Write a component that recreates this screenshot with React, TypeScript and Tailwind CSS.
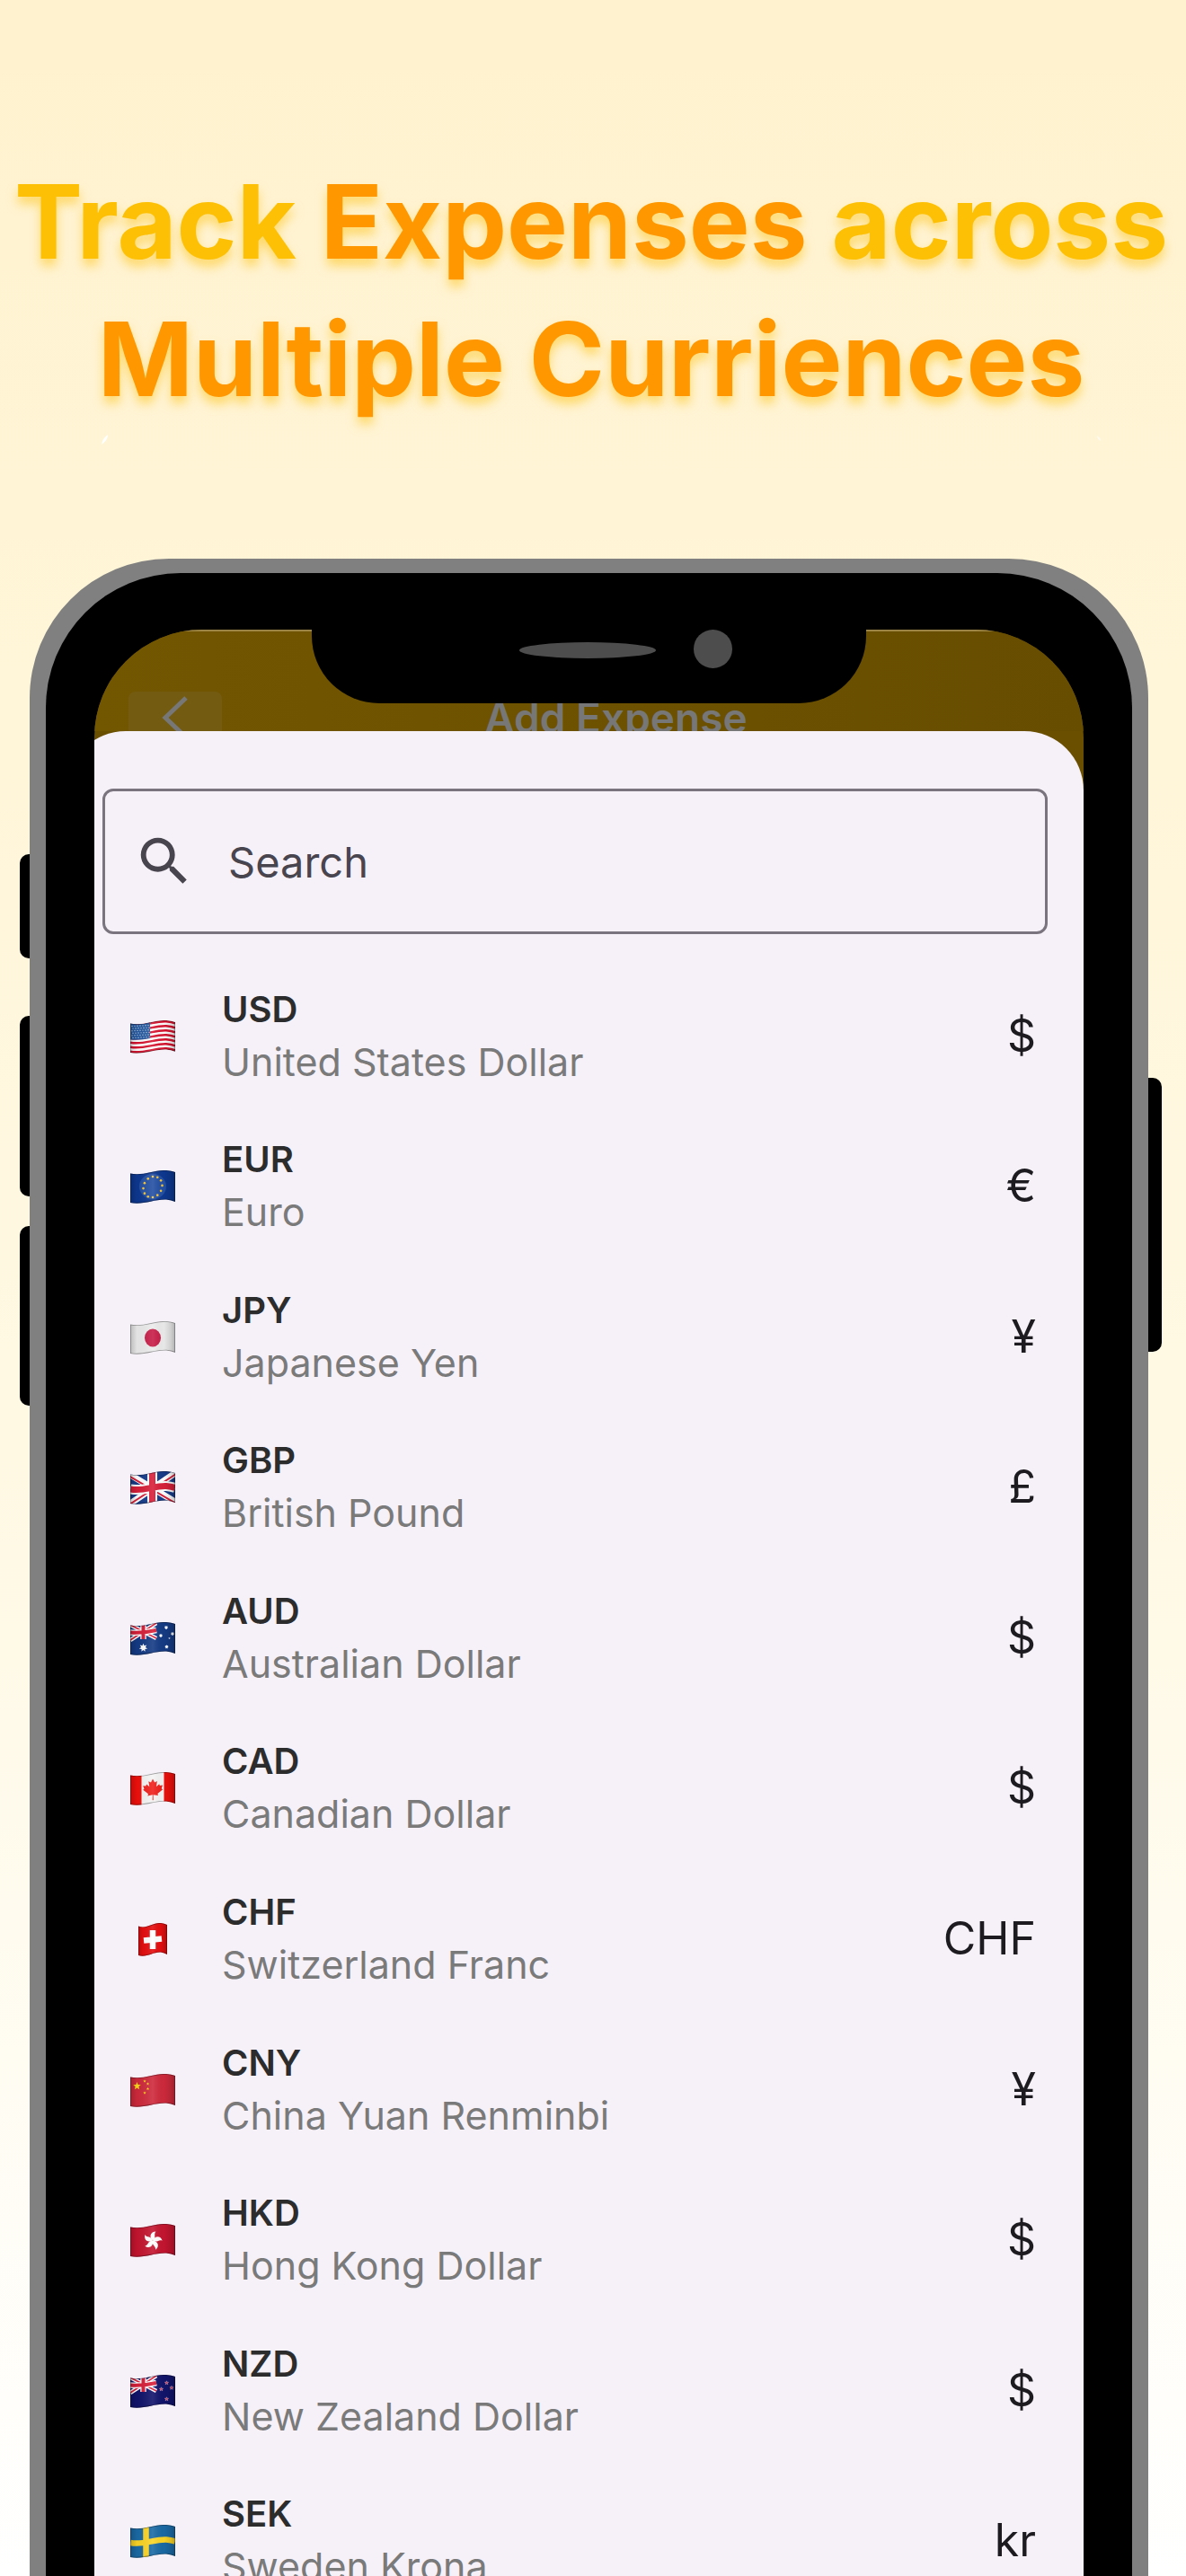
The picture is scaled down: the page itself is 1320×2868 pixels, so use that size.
import { useId, type ReactNode } from "react";

// One horizontal line of the waving cloth that starts at height y.
const wave = (y: number) =>
  `M0 ${y}C14 ${y + 3} 26 ${y - 4} 40 ${y - 3.5}Q46 ${y - 3} 50 ${y - 1.5}`;

const CLOTH = "M0 3.5C14 6.500 26 -.5 40 0Q46 .5 50 2V35Q46 33 40 32.500C26 32 14 39 0 36Z";
const SMALL_CLOTH = "M9 3.500C18 7 25 -.5 34 0Q38 .5 41 2V35Q38 33 34 32.500C25 32 18 39 9 36Z";

function star(cx: number, cy: number, r: number, points = 5, inner = 0.42) {
  const out: string[] = [];
  for (let i = 0; i < points * 2; i++) {
    const a = (Math.PI * i) / points - Math.PI / 2;
    const d = i % 2 ? r * inner : r;
    out.push(`${(cx + d * Math.cos(a)).toFixed(2)},${(cy + d * Math.sin(a)).toFixed(2)}`);
  }
  return out.join(" ");
}

function Flag({ name, small, children }: { name: string; small?: boolean; children: ReactNode }) {
  const id = useId();
  const cloth = small ? SMALL_CLOTH : CLOTH;
  return (
    <svg viewBox="0 0 50 38" className="mt-1 h-[38px] w-[50px] shrink-0" role="img" aria-label={name}>
      <defs>
        <clipPath id={`${id}c`}>
          <path d={cloth} />
        </clipPath>
        <linearGradient id={`${id}g`}>
          <stop offset="0" stopColor="#000" stopOpacity=".2" />
          <stop offset=".15" stopColor="#000" stopOpacity=".04" />
          <stop offset=".5" stopColor="#fff" stopOpacity=".1" />
          <stop offset=".75" stopColor="#000" stopOpacity=".02" />
          <stop offset=".9" stopColor="#000" stopOpacity=".12" />
          <stop offset="1" stopColor="#000" stopOpacity=".25" />
        </linearGradient>
      </defs>
      <g clipPath={`url(#${id}c)`}>
        {children}
        <path d={cloth} fill={`url(#${id}g)`} stroke="#000" strokeOpacity=".35" strokeWidth="1.6" />
      </g>
    </svg>
  );
}

function Fill({ color }: { color: string }) {
  return <rect width="50" height="38" fill={color} />;
}

function UnionCanton() {
  return (
    <g>
      <path d="M0 3L29 18M29 1L0 20" stroke="#fff" strokeWidth="4.500" />
      <path d="M0 3L29 18M29 1L0 20" stroke="#d8203a" strokeWidth="1.6" />
      <path d="M14.500 0V19M0 11.500Q14 12.500 29 9" stroke="#fff" strokeWidth="6.500" fill="none" />
      <path d="M14.500 0V19M0 11.500Q14 12.500 29 9" stroke="#d8203a" strokeWidth="4" fill="none" />
    </g>
  );
}

const flags: Record<string, ReactNode> = {
  USD: (
    <Flag name="United States">
      <Fill color="#fff" />
      {[0, 2, 4, 6, 8, 10, 12].map((i) => (
        <path key={i} d={wave(4.75 + i * 2.5)} stroke="#d8132f" strokeWidth="2.500" fill="none" />
      ))}
      <path d="M0 3Q11 6 22 2V20Q11 22.500 0 21.500Z" fill="#2659a0" />
      {Array.from({ length: 6 }, (_, r) =>
        Array.from({ length: 7 }, (_, c) => (
          <circle key={`${r}-${c}`} cx={2 + c * 3 + (r % 2)} cy={6.5 + r * 2.6 - c * 0.15} r=".7" fill="#b9d0e8" />
        )),
      )}
    </Flag>
  ),
  EUR: (
    <Flag name="European Union">
      <Fill color="#0d3890" />
      <ellipse cx="25" cy="18" rx="15" ry="14" fill="#2450a3" />
      {Array.from({ length: 12 }, (_, i) => {
        const a = (i * Math.PI) / 6;
        return <circle key={i} cx={25 + 10.5 * Math.cos(a)} cy={18.5 + 11.5 * Math.sin(a) - 1.6 * Math.cos(a)} r="1.3" fill="#f4c53c" />;
      })}
    </Flag>
  ),
  JPY: (
    <Flag name="Japan">
      <Fill color="#ececec" />
      <ellipse cx="25" cy="18.500" rx="9" ry="10" fill="#c81e48" />
    </Flag>
  ),
  GBP: (
    <Flag name="United Kingdom">
      <Fill color="#173c8a" />
      <path d="M0 4L50 34M50 2L0 36" stroke="#fff" strokeWidth="7" />
      <path d="M-1 5.500L50 35.500M51 3L-1 37" stroke="#d8203a" strokeWidth="2" />
      <path d={`${wave(20)}M24.500 0V38`} stroke="#fff" strokeWidth="11" fill="none" />
      <path d={`${wave(20)}M24.500 0V38`} stroke="#d8203a" strokeWidth="7" fill="none" />
    </Flag>
  ),
  AUD: (
    <Flag name="Australia">
      <Fill color="#153b85" />
      <UnionCanton />
      <polygon points={star(14.5, 28.5, 4.8, 7, 0.5)} fill="#fff" />
      <polygon points={star(40, 6, 2.3, 7, 0.6)} fill="#fff" />
      <polygon points={star(34, 15, 2.2, 7, 0.6)} fill="#fff" />
      <polygon points={star(47, 13, 2.2, 7, 0.6)} fill="#fff" />
      <polygon points={star(43.5, 18, 1.3)} fill="#fff" />
      <polygon points={star(40.5, 27.5, 2.3, 7, 0.6)} fill="#fff" />
    </Flag>
  ),
  CAD: (
    <Flag name="Canada">
      <Fill color="#f5f5f5" />
      <rect width="12.500" height="38" fill="#f0100c" />
      <rect x="37.500" width="12.500" height="38" fill="#f0100c" />
      <path
        d="M25 7.500l2.200 4 2.600-1.500-.8 6.200 3.200-3 .7 1.800 3.100-.4-1.200 3.700 1.400.9-5.800 4.700.6 2.200-5.400-.8.200 6h-1.200l.200-6-5.400 1.100.6-2.200-5.800-4.400 1.300-1-1.300-3.500 3.100.2.800-1.900 3.200 2.700-1-6.100 2.700 1.300z"
        fill="#f0201c"
      />
    </Flag>
  ),
  CHF: (
    <Flag name="Switzerland" small>
      <Fill color="#e60f10" />
      <path d="M25 8V29M15 19.500L35 17.500" stroke="#fff" strokeWidth="6.500" />
    </Flag>
  ),
  CNY: (
    <Flag name="China">
      <Fill color="#cf2a3c" />
      <polygon points={star(7.5, 13.5, 4.6)} fill="#fbd91c" />
      <polygon points={star(16, 8, 1.8)} fill="#fbd91c" />
      <polygon points={star(19.5, 11, 1.8)} fill="#fbd91c" />
      <polygon points={star(19.5, 16.5, 1.8)} fill="#fbd91c" />
      <polygon points={star(16, 21, 1.8)} fill="#fbd91c" />
    </Flag>
  ),
  HKD: (
    <Flag name="Hong Kong">
      <Fill color="#c51530" />
      {[8, 80, 152, 224, 296].map((a) => (
        <path key={a} d="M25 18.500C20 15 21 9 27 8C24.500 12 29 14 25 18.500Z" fill="#fff" transform={`rotate(${a} 25 18.5)`} />
      ))}
    </Flag>
  ),
  NZD: (
    <Flag name="New Zealand">
      <Fill color="#12146c" />
      <UnionCanton />
      <polygon points={star(40.5, 9, 2.2)} fill="#dc3350" stroke="#dcb9cf" strokeWidth=".5" />
      <polygon points={star(34.5, 16, 2.2)} fill="#dc3350" stroke="#dcb9cf" strokeWidth=".5" />
      <polygon points={star(46, 14.5, 2.2)} fill="#dc3350" stroke="#dcb9cf" strokeWidth=".5" />
      <polygon points={star(40.5, 27, 2.2)} fill="#dc3350" stroke="#dcb9cf" strokeWidth=".5" />
    </Flag>
  ),
  SEK: (
    <Flag name="Sweden">
      <Fill color="#1a6aa5" />
      <path d={`${wave(20)}M17.500 0V38`} stroke="#fbd526" strokeWidth="6.500" fill="none" />
    </Flag>
  ),
};

const currencies = [
  { code: "USD", name: "United States Dollar", symbol: "$" },
  { code: "EUR", name: "Euro", symbol: "€" },
  { code: "JPY", name: "Japanese Yen", symbol: "¥" },
  { code: "GBP", name: "British Pound", symbol: "£" },
  { code: "AUD", name: "Australian Dollar", symbol: "$" },
  { code: "CAD", name: "Canadian Dollar", symbol: "$" },
  { code: "CHF", name: "Switzerland Franc", symbol: "CHF" },
  { code: "CNY", name: "China Yuan Renminbi", symbol: "¥" },
  { code: "HKD", name: "Hong Kong Dollar", symbol: "$" },
  { code: "NZD", name: "New Zealand Dollar", symbol: "$" },
  { code: "SEK", name: "Sweden Krona", symbol: "kr" },
];

function Notch() {
  return (
    <div className="absolute inset-x-0 top-0 flex justify-center">
      <div className="flex h-[82px] w-[56%] items-start justify-center rounded-b-[75px] bg-black">
        <div className="mt-[14px] ml-[83px] h-[18px] w-[152px] rounded-[50%] bg-[#4d4d4d]" />
        <div className="ml-[42px] h-[43px] w-[43px] rounded-full bg-[#4d4d4d]" />
      </div>
    </div>
  );
}

function AppHeader() {
  return (
    <header className="flex h-[113px] items-start overflow-hidden border-t-2 border-[#9c8544] bg-gradient-to-r from-[#735600] to-[#674d00] pt-[67px] pr-[82px] pl-[38px]">
      <button
        type="button"
        aria-label="Back"
        className="flex h-[60px] w-[104px] shrink-0 justify-center rounded-t-lg bg-[#735c12]"
      >
        <svg viewBox="0 0 30 60" className="h-[60px] w-[30px]" fill="none" stroke="#777" strokeWidth="5">
          <path d="M27 7L4 29L27 51" />
        </svg>
      </button>
      <h2 className="flex-1 text-center text-[46px] leading-[58px] font-semibold text-[#777]">Add Expense</h2>
    </header>
  );
}

function SearchBox() {
  return (
    <label className="mr-10 ml-10 flex h-[162px] items-center rounded-xl border-3 border-[#79747e] pl-[31px]">
      <svg viewBox="0 0 24 24" className="h-[70px] w-[70px] shrink-0" fill="#49454f" aria-hidden="true">
        <path d="M15.500 14h-.79l-.28-.27A6.471 6.471 0 0 0 16 9.500 6.500 6.500 0 1 0 9.500 16c1.610 0 3.090-.59 4.230-1.570l.27.28v.79l5 4.990L20.490 19l-4.990-5zm-6 0C7.010 14 5 11.990 5 9.500S7.010 5 9.500 5 14 7.010 14 9.500 11.990 14 9.500 14z" />
      </svg>
      <input
        type="text"
        aria-label="Search"
        placeholder="Search"
        className="ml-9 h-full min-w-0 flex-1 bg-transparent text-[47px] text-[#49454f] outline-none placeholder:text-[#49454f]"
      />
    </label>
  );
}

function CurrencyList() {
  return (
    <ul className="mt-[29px] grid h-[1843px] auto-rows-fr pr-[53px] pl-[71px]">
      {currencies.map((c) => (
        <li key={c.code} className="flex items-center">
          {flags[c.code]}
          <div className="ml-[52px] flex-1 leading-[58px]">
            <p className="text-[40px] font-semibold text-[#2c2c2c]">{c.code}</p>
            <p className="text-[43px] text-[#7a7a7a]">{c.name}</p>
          </div>
          <span className="text-[50px] leading-[58px] text-[#1d1b20]">{c.symbol}</span>
        </li>
      ))}
    </ul>
  );
}

function Sparkles() {
  return (
    <div className="flex h-[146px] justify-between pt-[7px] pr-[91px] pl-[111px]" aria-hidden="true">
      <svg viewBox="0 0 10 14" className="h-[14px] w-[10px]">
        <path d="M9 1Q9 7 2 12Q3 5 9 1Z" fill="#fff" />
      </svg>
      <svg viewBox="0 0 10 14" className="h-[14px] w-[10px]">
        <path d="M2 2Q2 6 6 8Q6 4 2 2Z" fill="#fffaf0" />
      </svg>
    </div>
  );
}

export default function App() {
  return (
    <main className="h-screen overflow-hidden bg-gradient-to-b from-[#fff2ce] via-[#fff9e5] via-60% to-white font-['Inter',sans-serif]">
      <h1 className="pt-[170px] pr-1 text-center text-[114px] leading-[153px] font-bold whitespace-nowrap text-[#ff9800] [text-shadow:0_8px_12px_rgba(253,195,20,0.55)]">
        <span className="text-[#fdc004]">Track</span> Expenses <span className="text-[#fdc004]">across</span>
        <br />
        Multiple Curriences
      </h1>
      <Sparkles />

      <div className="relative mr-[42px] ml-[33px]">
        <div className="absolute top-[329px] -left-[11px] h-[116px] w-5 rounded-l-[10px] bg-black" />
        <div className="absolute top-[509px] -left-[11px] h-[201px] w-5 rounded-l-[10px] bg-black" />
        <div className="absolute top-[743px] -left-[11px] h-[200px] w-5 rounded-l-[10px] bg-black" />
        <div className="absolute top-[578px] -right-[15px] h-[305px] w-6 rounded-r-[10px] bg-black" />

        <div className="relative rounded-t-[155px] bg-[#808080] px-[18px] pt-4">
          <div className="rounded-t-[150px] bg-black px-[54px] pt-[63px]">
            <section className="relative overflow-hidden rounded-t-[120px] bg-[#6a4f00]">
              <AppHeader />
              <div className="-ml-[31px] rounded-t-[66px] bg-[#f6f1f9] pt-16">
                <SearchBox />
                <CurrencyList />
              </div>
              <Notch />
            </section>
          </div>
        </div>
      </div>
    </main>
  );
}
